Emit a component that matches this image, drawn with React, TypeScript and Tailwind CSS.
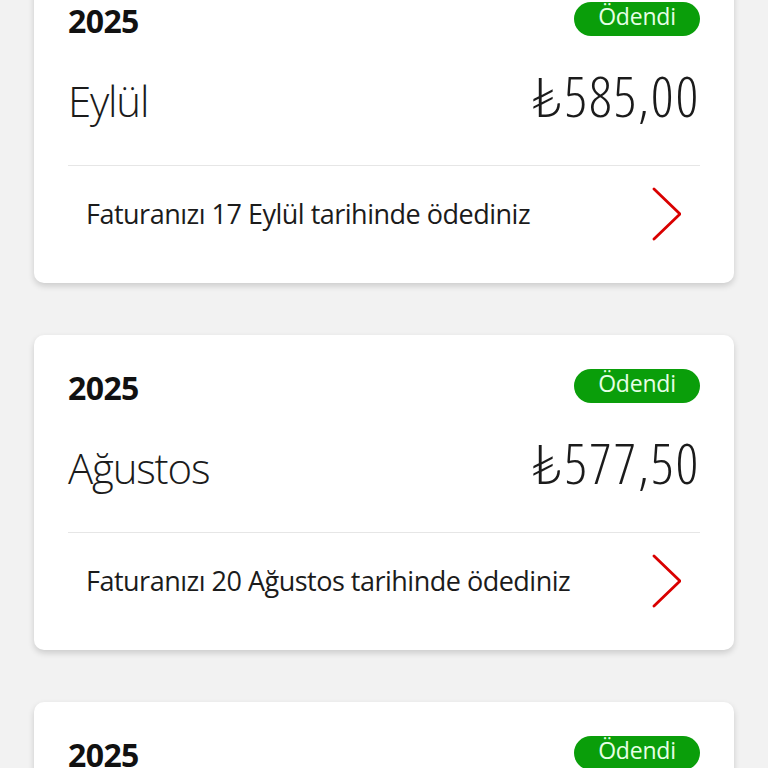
const bills = [
    {year: "2025", month: "Eylül", amount: "₺585,00", note: "Faturanızı 17 Eylül tarihinde ödediniz"},
    {year: "2025", month: "Ağustos", amount: "₺577,50", note: "Faturanızı 20 Ağustos tarihinde ödediniz"},
    {year: "2025", month: "Temmuz", amount: "₺570,00", note: "Faturanızı 18 Temmuz tarihinde ödediniz"},
];

function Chevron() {
    return (
        <svg width="30" height="54" viewBox="0 0 30 54" fill="none" className="-my-[7px] shrink-0">
            <path d="M3 2 L29 27 L3 52" stroke="#d90000" strokeWidth="2.8" strokeLinecap="round" strokeLinejoin="round" />
        </svg>
    );
}

function BillCard({bill}: {bill: (typeof bills)[number]}) {
    return (
        <div className="bg-white rounded-[10px] shadow-[0_3px_6px_rgba(0,0,0,0.16)] px-[34px] pt-[33px] pb-[49px] shrink-0">
            <div className="flex h-[40px] items-start justify-between">
                <span className="text-[32px] leading-[40px] font-bold tracking-[-0.6px] text-[#111]">{bill.year}</span>
                <span className="mt-px flex h-[34px] w-[126px] justify-center rounded-full bg-[#0a9e0a] text-[23px] leading-[28px] tracking-[-0.2px] text-[#e6ffe6]">
                    Ödendi
                </span>
            </div>
            <div className="mt-[22px] flex h-[64px] items-baseline justify-between">
                <span className="text-[42px] leading-[64px] font-light tracking-[-1.2px] text-[#1b1b1b]">{bill.month}</span>
                <span className="text-[56px] leading-[64px] font-light font-stretch-condensed tracking-[1.8px] text-[#1b1b1b]">
                    {bill.amount}
                </span>
            </div>
            <div className="mt-[38px] h-px bg-[#e6e6e6]" />
            <div className="mt-[28px] flex h-[40px] items-center justify-between pl-[18px] pr-[19px]">
                <span className="text-[27px] leading-[40px] tracking-[-0.5px] text-[#1b1b1b]">{bill.note}</span>
                <Chevron />
            </div>
        </div>
    );
}

export default function App() {
    return (
        <div className="h-screen overflow-hidden bg-[#f2f2f2] font-['Open_Sans','Lato',sans-serif]">
            <div className="-mt-8 flex flex-col gap-[52px] px-[34px]">
                {bills.map((bill, i) => (
                    <BillCard key={i} bill={bill} />
                ))}
            </div>
        </div>
    );
}
